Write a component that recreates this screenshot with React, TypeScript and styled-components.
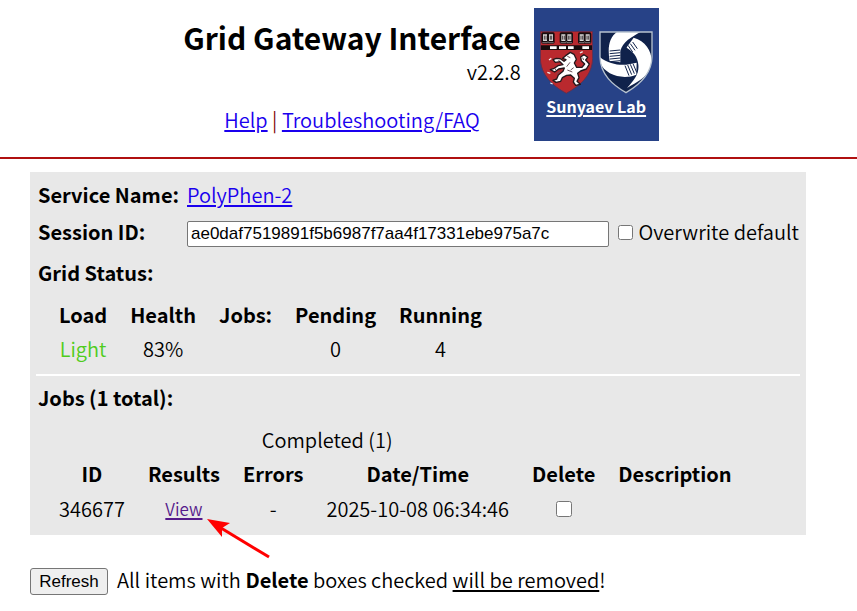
import React from "react";
import styled, { createGlobalStyle } from "styled-components";

const GlobalStyle = createGlobalStyle`
  *, *::before, *::after { box-sizing: border-box; }
  body {
    margin: 0;
    background: #fff;
    color: #000;
    font: 350 20px/28px "Noto Sans CJK SC", "Noto Sans", sans-serif;
  }
  a { color: #1a00ee; text-underline-offset: 2px; text-decoration-thickness: 2px; }
  u { text-underline-offset: 2px; text-decoration-thickness: 2px; }
  th, strong { font-weight: 700; }
`;

const Header = styled.header`
  display: flex;
  justify-content: center;
  align-items: flex-start;
  gap: 13px;
  padding: 8px 15px 16px 0;
  border-bottom: 2px solid #b01010;
`;

const Heading = styled.div`
  display: flex;
  flex-direction: column;
`;

const Title = styled.h1`
  margin: 8px 0 0;
  font-size: 30px;
  line-height: 42px;
  font-weight: 700;
`;

const Version = styled.span`
  align-self: flex-end;
`;

const Nav = styled.nav`
  margin-top: 20px;
  text-align: center;
`;

const Separator = styled.span`
  color: #800000;
`;

const LabCard = styled.a`
  display: flex;
  flex-direction: column;
  align-items: center;
  width: 125px;
  height: 133px;
  padding-top: 23px;
  background: #274287;
  color: #fff;
  font-size: 16px;
  line-height: 24px;
  font-weight: 700;
`;

const Shields = styled.span`
  display: flex;
  gap: 6px;
`;

const Main = styled.main`
  margin: 13px 51px 0 30px;
`;

const Panel = styled.section`
  padding: 9px 6px;
  background: #e8e8e8;
`;

const Field = styled.div<{ $space?: number }>`
  display: flex;
  align-items: center;
  min-height: 28px;
  margin-bottom: ${(p) => p.$space ?? 8}px;
  padding-left: 2px;
`;

const FieldLabel = styled.label`
  width: 149px;
  font-weight: 700;
`;

const SessionInput = styled.input`
  flex: 1;
  min-width: 0;
  height: 26px;
  margin-top: 4px;
  padding: 1px 3px;
  border: 1px solid #767676;
  border-radius: 2px;
  background: #fff;
  color: #000;
  font: 17px "Liberation Sans", Arial, sans-serif;
`;

const CheckLabel = styled.label`
  display: flex;
  align-items: center;
  gap: 5px;
  margin: 0 1px 0 9px;
  white-space: nowrap;
`;

const Check = styled.input<{ $size: number }>`
  display: inline-block;
  width: ${(p) => p.$size}px;
  height: ${(p) => p.$size}px;
  margin: 0;
`;

const SectionTitle = styled.h2`
  margin: 0;
  padding-left: 2px;
  font-size: 20px;
  line-height: 28px;
  font-weight: 700;
`;

const Table = styled.table`
  margin: 11px 0 0 11px;
  border-collapse: collapse;
  th, td {
    padding: 3px 12px;
    text-align: center;
    white-space: nowrap;
  }
  th:not(:first-child), td:not(:first-child) { padding-left: 11px; }
`;

const Load = styled.td`
  color: #4fcc1c;
`;

const Divider = styled.hr`
  height: 2px;
  margin: 8px 0;
  border: 0;
  background: #fff;
`;

const ResultCell = styled.td`
  position: relative;
`;

const ViewLink = styled.a`
  color: #551a8b;
  font-size: 17px;
`;

const Arrow = styled.svg`
  position: absolute;
  left: 70px;
  top: 28px;
  overflow: visible;
  pointer-events: none;
`;

const Footer = styled.footer`
  display: flex;
  align-items: center;
  gap: 9px;
  margin-top: 30px;
`;

const Button = styled.button`
  width: 78px;
  height: 27px;
  margin-top: 3px;
  padding: 0;
  border: 1px solid #767676;
  border-radius: 3px;
  background: #efefef;
  color: #000;
  font: 17px "Liberation Sans", Arial, sans-serif;
`;

const Book = ({ x }: { x: number }) => (
  <g transform={`translate(${x} 4)`}>
    <rect width="40" height="34" rx="5" fill="#170d10" />
    <path d="M5 6h12v20H5zM23 6h12v20H23z" fill="#d8d5d5" />
    <path d="M9 10v12M14 10v12M27 10v12M31 10v12" stroke="#4b4245" strokeWidth="3" />
    <path d="M3 31h15l2-3 2 3h15" fill="none" stroke="#aaa" strokeWidth="2" />
  </g>
);

const LionShield = () => (
  <svg width="53" height="63" viewBox="0 0 159 189" aria-hidden="true">
    <path d="M1 1H158V82C157 132 121 164 79 187C38 165 2 132 1 82Z" fill="#b9292e" stroke="#5d3153" strokeWidth="3" />
    <Book x={4} />
    <Book x={59} />
    <Book x={114} />
    <path d="M3 43H156V57H3Z" fill="#180c0e" />
    <path d="M30 46h20v8H30zM57 46h21v8H57zM84 46h17v8H84zM127 46h20v8h-20z" fill="#fff" />
    <path
      d="M77 74L91 64L102 70L109 85L103 96L110 109L126 109L134 99L124 89L122 78L132 71L143 79L137 87L148 99L139 114L122 120L113 127L117 140L111 151L121 160L107 163L100 153L103 142L92 132L80 133L67 140L62 151L48 154L39 148L50 144L55 132L69 121L73 111L56 114L44 123L31 116L43 112L54 104L69 101L60 92L46 94L39 86L49 82L61 83L72 91L78 86L68 82Z"
      fill="#fff" stroke="#24171b" strokeWidth="4" strokeLinejoin="round"
    />
    <path d="M82 76l9 4M90 94l-10 13M82 117l15 6M101 110l-9 7M60 121l-10 8M128 80l3 7M59 87l-5 4M45 112l2 5" stroke="#6a5359" strokeWidth="3" />
    <path d="M34 82l-7 5M31 127l-9 -3M38 159l-7-3M120 66l8-4" stroke="#eee" strokeWidth="4" />
  </svg>
);

const KnotShield = () => (
  <svg width="54" height="63" viewBox="0 0 162 189" aria-hidden="true">
    <clipPath id="knot-shield">
      <path d="M3 3H159V78C158 130 121 162 81 185C42 162 4 131 3 78Z" />
    </clipPath>
    <path d="M3 3H159V78C158 130 121 162 81 185C42 162 4 131 3 78Z" fill="#10224b" />
    <g clipPath="url(#knot-shield)">
      <path d="M82 50L104 20C143 31 163 66 157 103C145 142 113 153 84 171C107 146 121 127 118 101C116 78 103 61 82 50Z" fill="#fff" />
      <path d="M2 78C27 98 55 103 82 101L113 95L112 131C72 148 16 132 2 92Z" fill="#fff" />
      <path d="M55 2H126C101 16 70 32 64 61V94L32 90C25 51 30 19 55 2Z" fill="#fff" />
      <path d="M32 60L64 57M32 68L64 65M32 76L64 73M33 84L64 81M34 92L64 89" stroke="#10224b" strokeWidth="3" />
      <path d="M80 48L94 66M87 43L101 63M94 38L108 58M101 33L115 53" stroke="#10224b" strokeWidth="3" />
      <path d="M78 104L90 134M86 102L98 131M94 100L106 128M102 98L113 124" stroke="#10224b" strokeWidth="3" />
    </g>
    <path d="M3 3H159V78C158 130 121 162 81 185C42 162 4 131 3 78Z" fill="none" stroke="#b6c2cf" strokeWidth="4" />
  </svg>
);

export default function App() {
  return (
    <>
      <GlobalStyle />
      <Header>
        <Heading>
          <Title>Grid Gateway Interface</Title>
          <Version>v2.2.8</Version>
          <Nav>
            <a href="#help">Help</a> <Separator>|</Separator> <a href="#faq">Troubleshooting/FAQ</a>
          </Nav>
        </Heading>
        <LabCard href="#lab">
          <Shields>
            <LionShield />
            <KnotShield />
          </Shields>
          Sunyaev Lab
        </LabCard>
      </Header>
      <Main>
        <Panel>
          <Field>
            <FieldLabel as="span">Service Name:</FieldLabel>
            <a href="#polyphen">PolyPhen-2</a>
          </Field>
          <Field $space={12}>
            <FieldLabel htmlFor="session">Session ID:</FieldLabel>
            <SessionInput id="session" type="text" defaultValue="ae0daf7519891f5b6987f7aa4f17331ebe975a7c" />
            <CheckLabel>
              <Check type="checkbox" $size={15} />
              Overwrite default
            </CheckLabel>
          </Field>
          <SectionTitle>Grid Status:</SectionTitle>
          <Table>
            <thead>
              <tr>
                <th>Load</th>
                <th>Health</th>
                <th>Jobs:</th>
                <th>Pending</th>
                <th>Running</th>
              </tr>
            </thead>
            <tbody>
              <tr>
                <Load>Light</Load>
                <td>83%</td>
                <td />
                <td>0</td>
                <td>4</td>
              </tr>
            </tbody>
          </Table>
          <Divider />
          <SectionTitle>Jobs (1 total):</SectionTitle>
          <Table>
            <thead>
              <tr>
                <td colSpan={5}>Completed (1)</td>
              </tr>
              <tr>
                <th>ID</th>
                <th>Results</th>
                <th>Errors</th>
                <th>Date/Time</th>
                <th>Delete</th>
                <th>Description</th>
              </tr>
            </thead>
            <tbody>
              <tr>
                <td>346677</td>
                <ResultCell>
                  <ViewLink href="#view">View</ViewLink>
                  <Arrow width="64" height="40" viewBox="0 0 64 40" aria-hidden="true">
                    <path d="M14 9L62 38" stroke="#f00" strokeWidth="3" />
                    <path d="M0 0L23 4L15 9L15 18Z" fill="#f00" />
                  </Arrow>
                </ResultCell>
                <td>-</td>
                <td>2025-10-08 06:34:46</td>
                <td>
                  <Check type="checkbox" $size={16} aria-label="Delete job 346677" />
                </td>
                <td />
              </tr>
            </tbody>
          </Table>
        </Panel>
        <Footer>
          <Button type="button">Refresh</Button>
          <span>
            All items with <strong>Delete</strong> boxes checked <u>will be removed</u>!
          </span>
        </Footer>
      </Main>
    </>
  );
}
